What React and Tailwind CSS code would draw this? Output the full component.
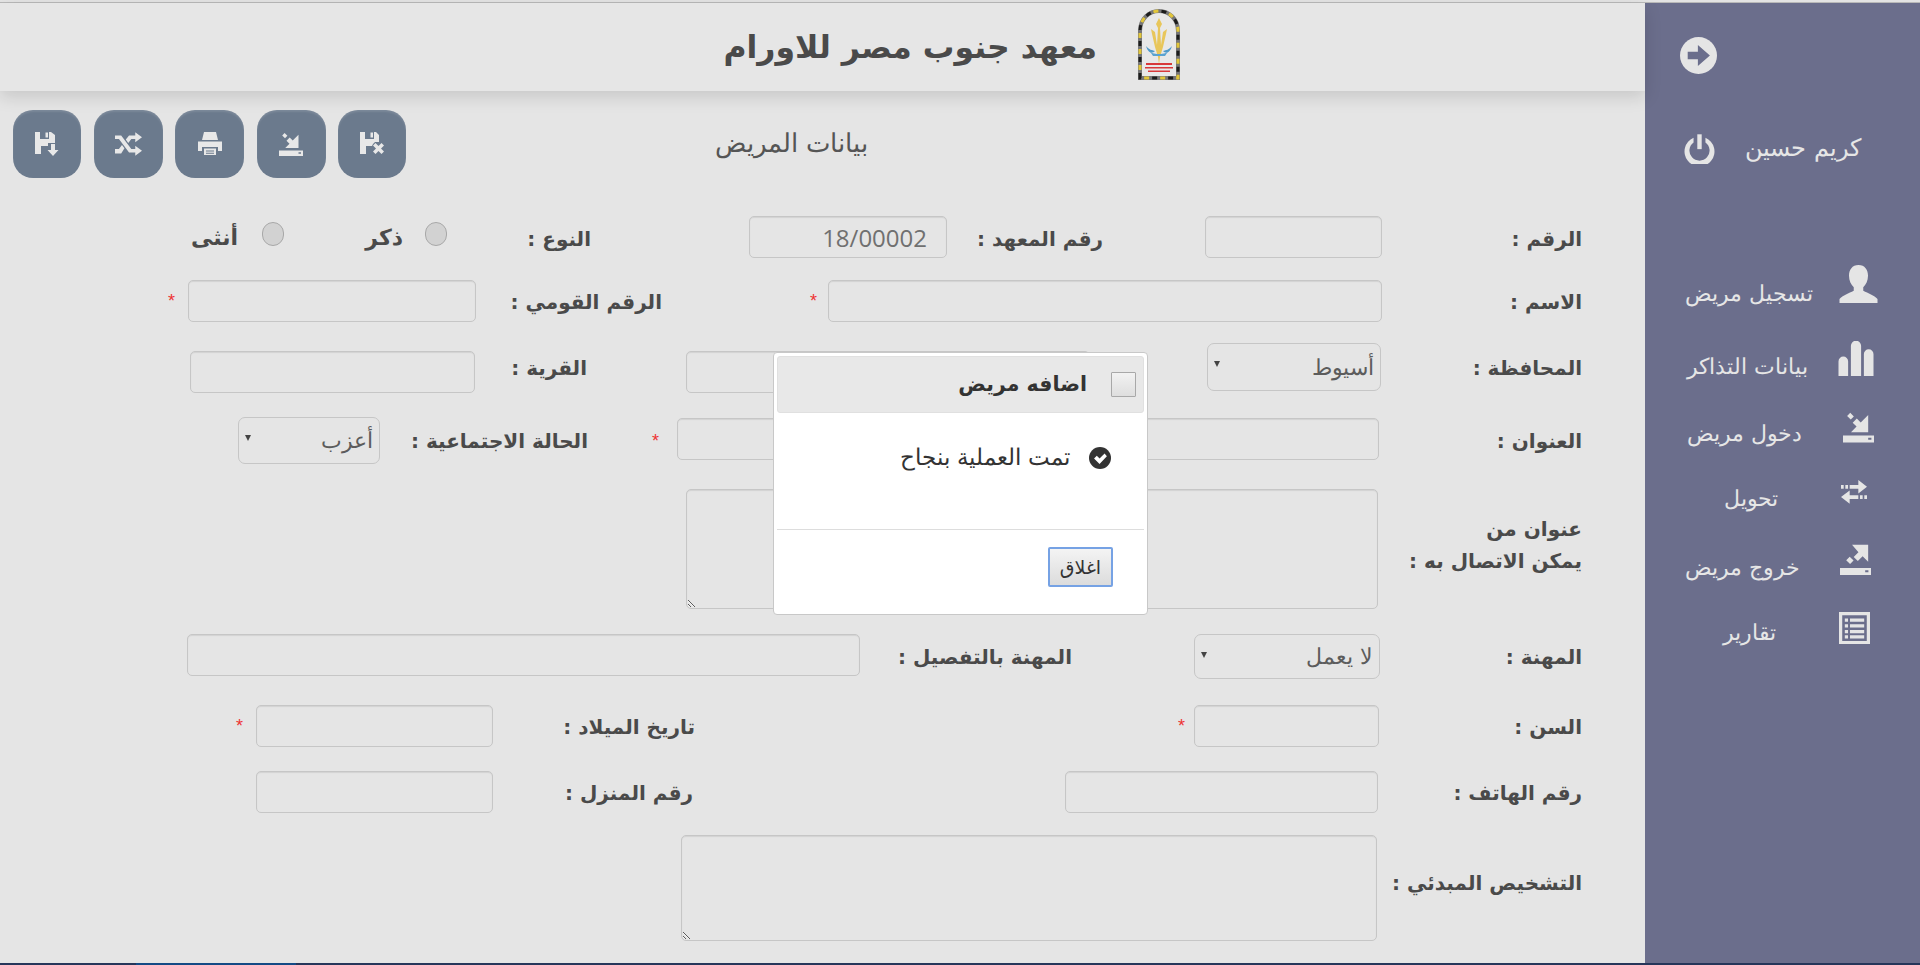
const AR = "font-['DejaVu_Sans',sans-serif]";

const Ico = ({ cls, children, vb = "0 0 24 24" }) => (
  <svg viewBox={vb} className={cls} fill="currentColor" aria-hidden="true">{children}</svg>
);

const CircleArrow = ({ cls }) => <Ico cls={cls}><circle cx="12" cy="12" r="12" /><path fill="#6b6e8c" d="M5 9.6h6.6V5.2L19.4 12l-7.8 6.8v-4.4H5z" /></Ico>;
const Power = ({ cls }) => <Ico cls={cls}><path d="M10.3 1h3.4v11.5h-3.4z" /><path d="M7.4 3.6v3.7a7.8 7.8 0 1 0 9.2 0V3.6a11.6 11.6 0 1 1-9.2 0z" /></Ico>;
const User = ({ cls }) => <Ico cls={cls}><path d="M12 0c4 0 6 3 6 6.8 0 3.200-1.300 5.700-3 7.200v2.300c3 1.500 7 3 9 5.200V24H0v-2.500c2-2.200 6-3.700 9-5.200V14c-1.700-1.500-3-4-3-7.200C6 3 8 0 12 0z" /></Ico>;
const Stats = ({ cls }) => <Ico cls={cls}><path d="M0 24V14a3.300 3.300 0 0 1 6.600 0v10zM8.500 24V3.300a3.500 3.500 0 0 1 7 0V24zM17.400 24V9a3.300 3.300 0 0 1 6.600 0v15z" /></Ico>;
const ImportI = ({ cls }) => <Ico cls={cls}><path fillRule="evenodd" d="M0 18.500h24V24H0zM19.500 20.300v1.500h2.500v-1.500z" /><path d="M19.500 2.700V16H6.200l4.300-4.300-3-3 3.200-3.200 3 3zM3.200 3.400 5.600 1l2.800 2.800L6 6.200z" /></Ico>;
const ExportI = ({ cls }) => <Ico cls={cls}><path fillRule="evenodd" d="M0 18.500h24V24H0zM19.500 20.300v1.500h2.500v-1.500z" /><path d="M21.800.5v13.300l-4.300-4.300-3.700 3.700-3.200-3.200 3.700-3.700L9.300.5zM4.800 12.500l2.700-2.700 3 3-2.700 2.700z" /></Ico>;
const Transfer = ({ cls }) => <Ico cls={cls}><path d="M0 4.500h2.500v3.500H0zM4 4.500h2.500v3.500H4zM8 4.500h8V0l8 6.200-8 6.300V8H8zM24 14h-2.500v3.500H24zM20 14h-2.500v3.500H20zM16 14H8V9.600L0 15.800 8 22v-4.500h8z" /></Ico>;
const ListAlt = ({ cls }) => <Ico cls={cls}><path fillRule="evenodd" d="M0 0h24v25H0zM2.500 2.500v20h19v-20zM4.500 5h2.500v2.500H4.500zM8.500 5h11v2.500h-11zM4.500 9.500h2.500V12H4.500zM8.500 9.500h11V12h-11zM4.500 14h2.500v2.500H4.500zM8.500 14h11v2.500h-11zM4.500 18h2.500v2.500H4.500zM8.500 18h11v2.500h-11z" /></Ico>;
const FloppySave = ({ cls }) => <Ico cls={cls}><path fillRule="evenodd" d="M0 0h5v7h9V0h2l4 3v8h-7v3H6v8H0zM10.500.5h2.500v5h-2.500z" /><path d="M16 12h4v6h3.500l-5.500 6-5.500-6H16z" /></Ico>;
const FloppyRemove = ({ cls }) => <Ico cls={cls}><path fillRule="evenodd" d="M0 0h5v7h9V0h2l3 3v7h-4l-2 2-1 2H6v8H0zM10.500.5h2.500v5h-2.500z" /><path d="m15.500 11 3 3 3-3 2.500 2.500-3 3 3 3-2.500 2.500-3-3-3 3-2.500-2.500 3-3-3-3z" /></Ico>;
const Random = ({ cls }) => <Ico cls={cls}><path d="M0 4h5.500l9 12H18v-3l6 4.500-6 4.500v-3h-5.500l-9-12H0zM0 16h3.500l2.700-3.600 2.200 3L5.500 20H0zM12.500 4H18V1l6 4.500L18 10V7h-3.500l-2.700 3.600-2.200-3z" /></Ico>;
const Print = ({ cls }) => <Ico cls={cls}><path fillRule="evenodd" d="M6 0h12l2 8H4zM0 9.500h24V19h-4v-4H4v4H0zM6 16.500h12V23H6zM8 18.500v1h8v-1zM8 20.800v1h8v-1z" /></Ico>;
const OkSign = ({ cls }) => <Ico cls={cls}><circle cx="12" cy="12" r="12" /><path fill="#fff" d="m5.500 12.500 3-3 3 3 5.500-5.500 2.500 3-8 8.500z" /></Ico>;

const ARCH = "M3 70V23C3 11 12 3 22 3s19 8 19 20v47z";
const Logo = () => (
  <svg viewBox="0 0 44 72" className="w-[44px] h-[72px]" aria-hidden="true">
    <path d={ARCH} fill="#e8e8e8" stroke="#777" strokeWidth="4" />
    <path d={ARCH} fill="none" stroke="#1c1c1c" strokeWidth="3" strokeDasharray="5 11" />
    <path d={ARCH} fill="none" stroke="#e2c63a" strokeWidth="3" strokeDasharray="5 11" strokeDashoffset="8" />
    <path d="M22 10l3 6-2 4 1 17 2-13 4-3-1 5-3 13-3 10-1 7-1-7-3-10-3-13-1-5 4 3 2 13 1-17-2-4z" fill="#e8c65a" />
    <path d="M9 38c3 4 6 4 9 5-3 3-7 2-9-5zM35 38c-3 4-6 4-9 5 3 3 7 2 9-5z" fill="#4f9ac9" />
    <path d="M12 42c2 3 5 4 10 4s8-1 10-4l-4 6H16z" fill="#5aa3d0" />
    <path d="M9 55h26v2H9zM8 59h28v1.500H8zM11 62.500h22v1.500H11z" fill="#d8383a" />
  </svg>
);

const Label = ({ w, cls = "", children }) => (
  <div className={`${AR} shrink-0 font-bold text-[20px] leading-[32px] text-[#4a4a4a] text-right whitespace-nowrap pt-[2px] ${cls} ${w}`} dir="rtl">{children}</div>
);
const inputCls = "shrink-0 block h-[42px] rounded-[5px] border border-[#c6c6c6] bg-[#e5e5e5] shadow-[inset_0_1px_1px_rgba(0,0,0,0.08)] outline-none";
const Star = ({ cls }) => <span className={`shrink-0 font-['Liberation_Sans',sans-serif] text-[18px] leading-[16px] text-[#e33] ${cls}`}>*</span>;
const Select = ({ cls, text }) => (
  <div className={`relative shrink-0 rounded-[7px] border border-[#c6c6c6] bg-[#e5e5e5] ${cls}`}>
    <select dir="rtl" defaultValue={text} className={`${AR} appearance-none w-full h-full bg-transparent pr-[6px] pl-[20px] text-[22px] font-light text-[#5c5c5c] outline-none`}>
      <option>{text}</option>
    </select>
    <span className="absolute left-[6px] top-[17px] w-0 h-0 border-x-[3.5px] border-x-transparent border-t-[6px] border-t-[#444]" />
  </div>
);
const Radio = ({ cls }) => <input type="radio" name="g" className={`appearance-none shrink-0 block w-[22px] h-[24px] rounded-full border border-[#a8a8a8] bg-[#d2d2d2] ${cls}`} />;

const ToolBtn = ({ Icon, w, size = "w-[24px] h-[24px]" }) => (
  <button type="button" className={`flex items-center justify-center h-[68px] rounded-[20px] bg-[#6b7a8d] text-[#e8e8e8] shadow-[inset_0_2px_2px_rgba(255,255,255,0.12)] ${w}`}><Icon cls={size} /></button>
);

const NavItem = ({ Icon, text, iconCls, textCls, rowCls }) => (
  <div className={`flex items-start ${rowCls}`}>
    <div className={`${AR} h-[26px] whitespace-nowrap text-[21.5px] font-light leading-[26px] text-[#e6e6e6] text-center ${textCls}`} dir="rtl">{text}</div>
    <Icon cls={`shrink-0 text-[#e5e5e5] ${iconCls}`} />
  </div>
);

export default function App() {
  return (
    <div className="w-[1920px] h-[965px] overflow-hidden flex flex-col bg-[#e5e5e5]">
      <div className="h-[3px] shrink-0 bg-[#e4e4e4] border-b border-[#b9b9b9]" />
      <div className="flex flex-1 min-h-0">
        <main className="relative w-[1645px] shrink-0">
          <header className="relative flex items-center h-[88px] bg-[#e6e6e6] shadow-[0_6px_16px_rgba(0,0,0,0.13)]">
            <h1 className={`${AR} ml-[722px] w-[375px] text-right font-bold text-[31.5px] leading-[40px] text-[#4a4a4a] whitespace-nowrap`} dir="rtl">معهد جنوب مصر للاورام</h1>
            <div className="ml-[40px] -mt-[7px]"><Logo /></div>
          </header>

          <div className="flex items-center mt-[19px] pl-[13px]">
            <div className="flex gap-[12.5px]">
              <ToolBtn Icon={FloppySave} w="w-[68px]" />
              <ToolBtn Icon={Random} w="w-[69px]" size="w-[27px] h-[27px]" />
              <ToolBtn Icon={Print} w="w-[69px]" />
              <ToolBtn Icon={ImportI} w="w-[69px]" size="w-[24px] h-[24px]" />
              <ToolBtn Icon={FloppyRemove} w="w-[68px]" />
            </div>
            <div className={`${AR} ml-[307px] w-[157px] -mt-[2px] text-center text-[26px] leading-[34px] font-light text-[#555] whitespace-nowrap`} dir="rtl">بيانات المريض</div>
          </div>

          <form className="flex flex-col">
            <div className="flex items-center mt-[38px] h-[42px]">
              <Label w="ml-[190px] w-[48px]" cls="text-[22px]">أنثى</Label>
              <Radio cls="ml-[24px] -mt-[6px]" />
              <Label w="ml-[81px] w-[38px]" cls="text-[22px]">ذكر</Label>
              <Radio cls="ml-[22px] -mt-[6px]" />
              <Label w="w-[144px]" cls="mt-[1px]">النوع :</Label>
              <input readOnly defaultValue="18/00002" dir="ltr" className={`${inputCls} ml-[158px] w-[198px] text-right pr-[19px] text-[24px] text-[#707070] font-['Open_Sans',sans-serif]`} />
              <Label w="w-[156px]" cls="mt-[1px]">رقم المعهد :</Label>
              <input className={`${inputCls} ml-[102px] w-[177px]`} />
              <Label w="w-[200px]" cls="mt-[1px]">الرقم :</Label>
            </div>

            <div className="flex items-center mt-[22px] h-[42px]">
              <Star cls="ml-[168px] w-[20px]" />
              <input className={`${inputCls} w-[288px]`} />
              <Label w="w-[186px]">الرقم القومي :</Label>
              <Star cls="ml-[148px] w-[18px]" />
              <input className={`${inputCls} w-[554px]`} />
              <Label w="w-[200px]">الاسم :</Label>
            </div>

            <div className="flex items-start mt-[21px] h-[50px]">
              <input className={`${inputCls} ml-[190px] mt-[8px] w-[285px]`} />
              <Label w="w-[112px] mt-[7px]">القرية :</Label>
              <input className={`${inputCls} ml-[99px] mt-[8px] w-[404px]`} />
              <Select cls="ml-[117px] w-[174px] h-[48px]" text="أسيوط" />
              <Label w="w-[201px] mt-[7px]">المحافظة :</Label>
            </div>

            <div className="flex items-center mt-[24px] h-[47px]">
              <Select cls="ml-[238px] w-[142px] h-[47px]" text="أعزب" />
              <Label w="w-[208px]" cls="-mt-[2px]">الحالة الاجتماعية :</Label>
              <Star cls="ml-[64px] w-[25px]" />
              <input className={`${inputCls} w-[280px] -mt-[4px]`} />
              <input className={`${inputCls} ml-[42px] w-[380px] -mt-[4px]`} />
              <Label w="w-[203px]" cls="-mt-[2px]">العنوان :</Label>
            </div>

            <div className="flex items-start mt-[25px] h-[120px]">
              <textarea dir="rtl" className={`${inputCls} ml-[686px] !h-[120px] w-[692px]`} />
              <Label w="w-[204px] mt-[22px]">عنوان من<br />يمكن الاتصال به :</Label>
            </div>

            <div className="flex items-center mt-[25px] h-[45px]">
              <input className={`${inputCls} ml-[187px] w-[673px] -mt-[3px]`} />
              <Label w="w-[212px]" cls="-mt-[2px]">المهنة بالتفصيل :</Label>
              <Select cls="ml-[122px] w-[186px] h-[45px]" text="لا يعمل" />
              <Label w="w-[202px]" cls="-mt-[2px]">المهنة :</Label>
            </div>

            <div className="flex items-center mt-[26px] h-[42px]">
              <Star cls="ml-[236px] w-[20px]" />
              <input className={`${inputCls} w-[237px]`} />
              <Label w="w-[202px]">تاريخ الميلاد :</Label>
              <Star cls="ml-[483px] w-[16px]" />
              <input className={`${inputCls} w-[185px]`} />
              <Label w="w-[203px]">السن :</Label>
            </div>

            <div className="flex items-center mt-[24px] h-[42px]">
              <input className={`${inputCls} ml-[256px] w-[237px]`} />
              <Label w="w-[200px]">رقم المنزل :</Label>
              <input className={`${inputCls} ml-[372px] w-[313px]`} />
              <Label w="w-[204px]">رقم الهاتف :</Label>
            </div>

            <div className="flex items-center mt-[22px] h-[106px]">
              <textarea dir="rtl" className={`${inputCls} ml-[681px] !h-[106px] w-[696px]`} />
              <Label w="w-[205px] -mt-[12px]">التشخيص المبدئي :</Label>
            </div>
          </form>

          <section className="absolute left-[773px] top-[349px] w-[375px] h-[263px] rounded-[4px] bg-white border border-[#c8c8c8] p-[3px]">
            <div className="flex items-center justify-end h-[57px] rounded-[3px] bg-[#e8e8e8] border border-[#e0e0e0]">
              <div className={`${AR} font-bold text-[20.5px] text-[#333] whitespace-nowrap`} dir="rtl">اضافه مريض</div>
              <button type="button" className="ml-[24px] mr-[7px] w-[25px] h-[25px] border border-[#a8a8a8] rounded-[1px] bg-gradient-to-b from-[#f2f2f2] to-[#dedede]" />
            </div>
            <div className="flex items-center justify-end h-[117px] pb-[26px] border-b border-[#ddd]">
              <div className={`${AR} font-light text-[22.5px] text-[#333] whitespace-nowrap`} dir="rtl">تمت العملية بنجاح</div>
              <OkSign cls="ml-[19px] mr-[33px] w-[22px] h-[22px] text-[#333]" />
            </div>
            <div className="flex justify-end pt-[17px] pr-[31px]">
              <button type="button" className={`${AR} w-[65px] h-[40px] text-[19px] text-[#333] rounded-[2px] border-2 border-[#76a2e4] bg-gradient-to-b from-[#f4f4f4] to-[#dcdcdc]`} dir="rtl">اغلاق</button>
            </div>
          </section>
        </main>

        <aside className="w-[275px] shrink-0 bg-[#6b6e8c] flex flex-col">
          <CircleArrow cls="ml-[35px] mt-[34px] w-[37px] h-[37px] shrink-0 text-[#e5e5e5]" />
          <div className="flex items-center h-[31px] mt-[59px] ml-[39px]">
            <Power cls="w-[31px] h-[31px] shrink-0 text-[#e5e5e5]" />
            <div className={`${AR} ml-[32px] w-[114px] leading-[31px] whitespace-nowrap text-right text-[24px] font-light text-[#e6e6e6]`} dir="rtl">كريم حسين</div>
          </div>
          <NavItem Icon={User} text="تسجيل مريض" rowCls="mt-[101px] h-[42px]" textCls="ml-[43px] mt-[16px] w-[125px]" iconCls="ml-[26px] w-[39px] h-[38px]" />
          <NavItem Icon={Stats} text="بيانات التذاكر" rowCls="mt-[34px] h-[39px]" textCls="ml-[48px] mt-[13px] w-[115px]" iconCls="ml-[30px] w-[36px] h-[35px]" />
          <NavItem Icon={ImportI} text="دخول مريض" rowCls="mt-[31px] h-[36px]" textCls="ml-[45px] mt-[10px] w-[112px]" iconCls="ml-[41px] w-[31px] h-[32px]" />
          <NavItem Icon={Transfer} text="تحويل" rowCls="mt-[33px] h-[32px]" textCls="ml-[79px] mt-[6px] w-[54px]" iconCls="ml-[61px] w-[30px] h-[26px]" />
          <NavItem Icon={ExportI} text="خروج مريض" rowCls="mt-[31px] h-[38px]" textCls="ml-[48px] mt-[12px] w-[107px]" iconCls="ml-[40px] w-[31px] h-[33px]" />
          <NavItem Icon={ListAlt} text="تقارير" rowCls="mt-[30px] h-[35px]" textCls="ml-[83px] mt-[9px] w-[48px]" iconCls="ml-[63px] w-[31px] h-[33px]" />
        </aside>
      </div>
      <div className="h-[2px] shrink-0 flex bg-[#26365a]">
        <div className="ml-[136px] w-[160px] bg-[#144a85]" />
      </div>
    </div>
  );
}
